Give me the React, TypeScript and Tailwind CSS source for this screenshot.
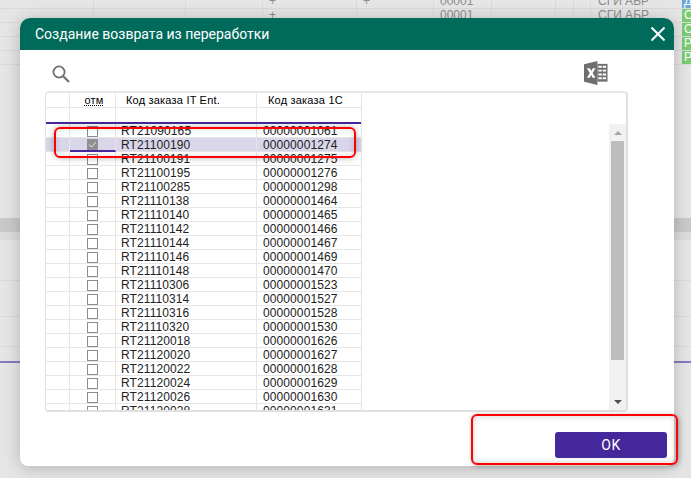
const orders = [
  ["RT21090165", "00000001061"],
  ["RT21100190", "00000001274"],
  ["RT21100191", "00000001275"],
  ["RT21100195", "00000001276"],
  ["RT21100285", "00000001298"],
  ["RT21110138", "00000001464"],
  ["RT21110140", "00000001465"],
  ["RT21110142", "00000001466"],
  ["RT21110144", "00000001467"],
  ["RT21110146", "00000001469"],
  ["RT21110148", "00000001470"],
  ["RT21110306", "00000001523"],
  ["RT21110314", "00000001527"],
  ["RT21110316", "00000001528"],
  ["RT21110320", "00000001530"],
  ["RT21120018", "00000001626"],
  ["RT21120020", "00000001627"],
  ["RT21120022", "00000001628"],
  ["RT21120024", "00000001629"],
  ["RT21120026", "00000001630"],
  ["RT21120028", "00000001631"],
];

const sheetRows = [
  { plus: true, plus2: true, code: "00001", name: "СГИ АБР", tag: "Д", blue: true, first: true },
  { plus: true, plus2: false, code: "00001", name: "СГИ АБР", tag: "С", blue: false, first: false },
  { plus: false, plus2: false, code: "", name: "", tag: "С", blue: false, first: false },
  { plus: false, plus2: false, code: "", name: "", tag: "Р", blue: false, first: false },
  { plus: false, plus2: false, code: "", name: "", tag: "Р", blue: false, first: false },
];

const SheetBehind = () => {
  return (
    <div className="text-[12px] leading-[14px] text-[#8c8c8c]">
      {sheetRows.map((row, i) => (
        <div
          key={i}
          className={`grid grid-cols-[94px_92px_77px_94px_77px_58px_64px_18px_17px_91px_9px] border-b border-[#d9d9d9] ${row.first ? "h-[9px]" : "h-[14px]"}`}
        >
          <div className="border-r border-[#d9d9d9]" />
          <div className="border-r border-[#d9d9d9]" />
          <div className="border-r border-[#d9d9d9]" />
          <div className="flex items-end justify-start overflow-hidden border-r border-[#d9d9d9] pl-[6px]">{row.plus ? "+" : ""}</div>
          <div className="flex items-end overflow-hidden border-r border-[#d9d9d9] pl-[6px]">{row.plus2 ? "+" : ""}</div>
          <div className="flex items-end overflow-hidden border-r border-[#d9d9d9] pl-[6px]">{row.code}</div>
          <div className="border-r border-[#d9d9d9]" />
          <div className="border-r border-[#d9d9d9]" />
          <div className="border-r border-[#d9d9d9]" />
          <div className="flex items-end overflow-hidden pl-[7px] whitespace-nowrap">{row.name}</div>
          <div className={`flex items-end overflow-hidden pl-[2px] text-white ${row.blue ? "bg-[#6ea5d6]" : "bg-[#7acb72]"}`}>{row.tag}</div>
        </div>
      ))}
      <div className="mt-[153px] h-[14px] bg-[#c9c9c9]" />
      <div className="h-[8px] bg-[#dcdcdc]" />
      <div className="mt-[40px] border-b border-[#d9d9d9]" />
      <div className="mt-[35px] border-b border-[#d9d9d9]" />
      <div className="mt-[29px] border-b border-[#d9d9d9]" />
      <div className="mt-[14px] h-[2px] bg-[#8a78bd]" />
    </div>
  );
};

const ExcelIcon = () => {
  return (
    <svg width="24" height="24" viewBox="0 0 25 25">
      <path d="M0 3.5 14 0v25L0 21.5z" fill="#6f6f6f" />
      <path d="M14 3h10.5v18.5H14z" fill="#6f6f6f" />
      <path d="M15 5h3.5v2H15zM19.5 5H23v2h-3.5zM15 9h3.5v2H15zM19.5 9H23v2h-3.5zM15 13h3.5v2H15zM19.5 13H23v2h-3.5zM15 17h3.5v2H15zM19.5 17H23v2h-3.5z" fill="#fff" />
      <path d="M3 7.5h3l1.6 3 1.6-3H12l-3 5 3 5H9l-1.5-3-1.5 3H3l3-5z" fill="#fff" />
    </svg>
  );
};

const App = () => {
  return (
    <div className="relative h-[478px] w-[691px] overflow-hidden bg-[#e5e5e5] font-['Liberation_Sans',sans-serif]">
      <SheetBehind />

      {/* modal */}
      <div className="absolute left-[20px] top-[18px] flex h-[448px] w-[654px] flex-col rounded-t-[10px] rounded-b-[8px] bg-white shadow-[0_2px_16px_rgba(0,0,0,0.22)]">
        <div className="flex h-[32px] shrink-0 items-center justify-between rounded-t-[10px] bg-[#006b5b] pl-[15px] pr-[9px]">
          <span className="font-['Roboto',sans-serif] text-[14px] text-white">Создание возврата из переработки</span>
          <svg width="14" height="14" viewBox="0 0 14 14" fill="none" stroke="#fff" strokeWidth="2">
            <path d="M0.5 0.5 13.5 13.5M13.5 0.5 0.5 13.5" />
          </svg>
        </div>

        <div className="flex h-[41px] shrink-0 items-start justify-between pl-[32px] pr-[66px]">
          <svg className="mt-[15px]" width="18" height="18" viewBox="0 0 18 18" fill="none" stroke="#707070">
            <circle cx="7" cy="7" r="5.6" strokeWidth="1.8" />
            <path d="M11 11 17 17" strokeWidth="2.2" />
          </svg>
          <div className="mt-[11px]">
            <ExcelIcon />
          </div>
        </div>

        <div className="mx-[25px] flex h-[321px] w-[583px] overflow-hidden rounded-[4px] border-t-2 border-r-2 border-b-2 border-l border-[#e0e0e0] border-t-[#e8e8e8]">
          <div className="w-[316px] shrink-0 border-r border-[#e2e2e2]">
            <div className="grid h-[15px] grid-cols-[24px_46px_141px_105px] border-b border-[#e6e6e6] text-[11px] leading-[15px] tracking-[0.2px] text-black">
              <div className="border-r border-[#e6e6e6]" />
              <div className="border-r border-[#e6e6e6] pl-[3px] text-center">
                <span className="underline decoration-dotted">отм</span>
              </div>
              <div className="border-r border-[#e6e6e6] pl-[10px]">Код заказа IT Ent.</div>
              <div className="pl-[11px]">Код заказа 1С</div>
            </div>
            <div className="grid h-[16px] grid-cols-[24px_46px_141px_105px] border-b-2 border-[#44289c]">
              <div className="border-r border-[#e6e6e6]" />
              <div className="border-r border-[#e6e6e6]" />
              <div className="border-r border-[#e6e6e6]" />
              <div />
            </div>
            {orders.map(([code, oneC], i) => (
              <div
                key={code}
                className={`grid h-[14px] grid-cols-[24px_46px_141px_105px] border-b border-[#e6e6e6] text-[12px] leading-[14px] tracking-[0.1px] text-[#222] ${i === 1 ? "bg-[#d9d6ea]" : ""}`}
              >
                <div className="border-r border-[#e6e6e6]" />
                <div className={`relative flex items-center justify-center border-r border-[#e6e6e6] ${i === 1 ? "border-b-2 border-b-[#44289c]" : ""}`}>
                  {i === 1 ? (
                    <div className="flex h-[11px] w-[11px] items-center justify-center bg-[#8f8f8f]">
                      <svg width="9" height="9" viewBox="0 0 9 9" fill="none" stroke="#eee" strokeWidth="1">
                        <path d="M1 4.5 3.5 7 8 2" />
                      </svg>
                    </div>
                  ) : (
                    <div className="h-[11px] w-[11px] border border-[#8c8c8c] bg-white" />
                  )}
                </div>
                <div className="border-r border-[#e6e6e6] pl-[5px]">{code}</div>
                <div className="pl-[6px]">{oneC}</div>
              </div>
            ))}
          </div>

          <div className="flex-1" />

          {/* scrollbar */}
          <div className="mt-[31px] flex w-[17px] shrink-0 flex-col items-center bg-[#f1f1f1]">
            <div className="mt-[7px] h-0 w-0 border-x-[4px] border-b-[4px] border-x-transparent border-b-[#a6a6a6]" />
            <div className="mt-[6px] h-[219px] w-[13px] bg-[#bdbdbd]" />
            <div className="mt-[40px] h-0 w-0 border-x-[4px] border-t-[4px] border-x-transparent border-t-[#505050]" />
          </div>
        </div>

        <div className="flex flex-1 items-start justify-end pr-[7px] pt-[20px]">
          <button className="h-[26px] w-[112px] rounded-[3px] bg-[#44289c] font-['Roboto',sans-serif] text-[14px] tracking-[0.5px] text-white">OK</button>
        </div>
      </div>

      {/* red marks drawn on top of the screenshot */}
      <div className="absolute left-[54px] top-[127px] h-[31px] w-[302px] rounded-[6px] border-2 border-[#f00] shadow-[0_0_6px_rgba(0,0,0,0.3),inset_0_0_6px_rgba(0,0,0,0.15)]" />
      <div className="absolute left-[471px] top-[414px] h-[51px] w-[207px] rounded-[6px] border-2 border-[#f00] shadow-[1px_1px_5px_rgba(0,0,0,0.3),inset_0_0_6px_rgba(0,0,0,0.2)]" />
    </div>
  );
};

export default App;
